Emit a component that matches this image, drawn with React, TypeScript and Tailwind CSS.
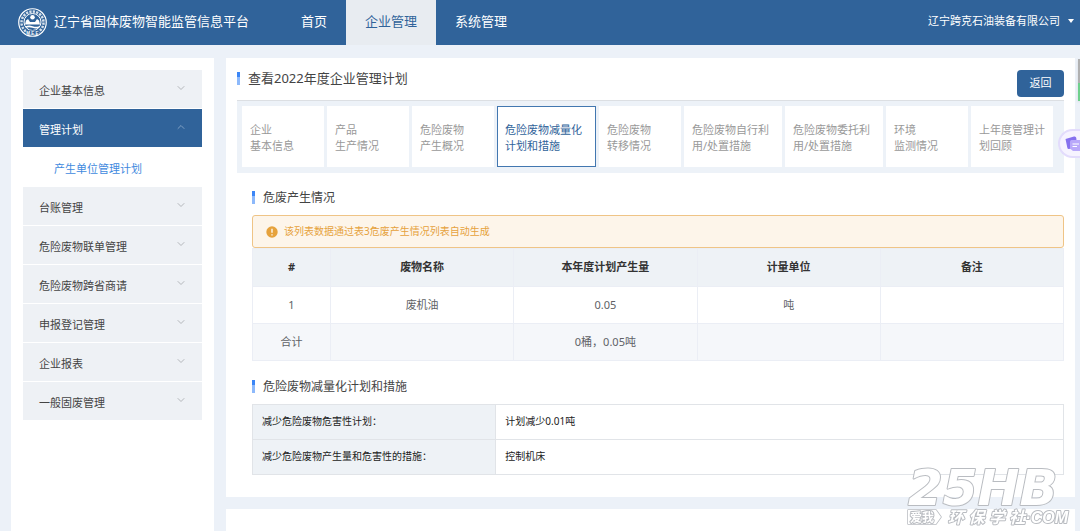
import React, { useState } from 'react';
import clsx from 'clsx';
import { ChevronDown, ChevronUp } from 'lucide-react';

const NAV_ITEMS = ['首页', '企业管理', '系统管理'];

const MENU_ITEMS = [
  { label: '企业基本信息' },
  { label: '管理计划', children: ['产生单位管理计划'] },
  { label: '台账管理' },
  { label: '危险废物联单管理' },
  { label: '危险废物跨省商请' },
  { label: '申报登记管理' },
  { label: '企业报表' },
  { label: '一般固废管理' },
];

const STEPS = [
  { lines: ['企业', '基本信息'], width: 'w-[82px]' },
  { lines: ['产品', '生产情况'], width: 'w-[82px]' },
  { lines: ['危险废物', '产生概况'], width: 'w-[82px]' },
  { lines: ['危险废物减量化', '计划和措施'], width: 'w-[99px]' },
  { lines: ['危险废物', '转移情况'], width: 'w-[82px]' },
  { lines: ['危险废物自行利', '用/处置措施'], width: 'w-[98px]' },
  { lines: ['危险废物委托利', '用/处置措施'], width: 'w-[98px]' },
  { lines: ['环境', '监测情况'], width: 'w-[82px]' },
  { lines: ['上年度管理计', '划回顾'], width: 'w-[82px]' },
];

const COLUMNS = ['#', '废物名称', '本年度计划产生量', '计量单位', '备注'];

const ROWS = [
  ['1', '废机油', '0.05', '吨', ''],
  ['合计', '', '0桶，0.05吨', '', ''],
];

const MEASURES = [
  { label: '减少危险废物危害性计划：', value: '计划减少0.01吨' },
  { label: '减少危险废物产生量和危害性的措施：', value: '控制机床' },
];

function Emblem() {
  return (
    <svg viewBox="0 0 58 58" className="h-[29px] w-[29px] shrink-0" fill="none" stroke="#fff">
      <circle cx="29" cy="29" r="27.5" strokeWidth="2.4" />
      <circle cx="29" cy="29" r="22" strokeWidth="5" strokeDasharray="4.5 2.4" opacity="0.8" />
      <circle cx="29" cy="28" r="17" fill="#30639a" strokeWidth="2" />
      <circle cx="29" cy="18.5" r="4.5" fill="#fff" stroke="none" />
      <path d="M14 33 L16 25 L20 22 L24 28 H34 L38 22 L42 25 L44 33 Z" fill="#fff" stroke="none" />
      <path d="M16 38 Q22 35.5 29 38 T42 38" strokeWidth="3" />
      <rect x="16" y="45" width="26" height="8" fill="#30639a" stroke="none" />
      <text x="29" y="53" textAnchor="middle" fill="#fff" stroke="none" fontSize="9" fontWeight="700" fontFamily="Liberation Sans, sans-serif">
        M E E
      </text>
    </svg>
  );
}

function Marker() {
  return (
    <span className="mb-[2px] flex h-[13px] w-[3px] shrink-0 flex-col">
      <span className="h-[5px] bg-[#3b86f7]" />
      <span className="flex-1 bg-[#8db9fb]" />
    </span>
  );
}

function Header() {
  return (
    <header className="flex h-[45px] shrink-0 items-stretch bg-[#30639a] text-white">
      <div className="flex w-[282px] items-center gap-[7px] pl-[18px]">
        <Emblem />
        <h1 className="pb-[2px] text-[13px] whitespace-nowrap">辽宁省固体废物智能监管信息平台</h1>
      </div>
      <nav className="flex">
        {NAV_ITEMS.map((item) => (
          <a
            key={item}
            href="#"
            className={clsx(
              'flex items-center px-[19px] pb-[2px] text-[13px]',
              item === '企业管理' && 'bg-[#e8ecf1] text-[#30639a]'
            )}
          >
            {item}
          </a>
        ))}
      </nav>
      <button className="ml-auto flex items-center gap-2 pr-[6px] pb-[3px] text-[11px]">
        辽宁跨克石油装备有限公司
        <svg viewBox="0 0 6 4" className="h-1 w-[6px]" fill="#fff">
          <path d="M0 0 H6 L3 4 Z" />
        </svg>
      </button>
    </header>
  );
}

function Sidebar() {
  const [open, setOpen] = useState('管理计划');

  return (
    <aside className="w-[203px] shrink-0 bg-white p-3">
      <ul className="flex flex-col gap-px text-[11px] text-[#444]">
        {MENU_ITEMS.map((item) => {
          const active = item.label === open;
          const Chevron = active ? ChevronUp : ChevronDown;

          return (
            <li key={item.label}>
              <button
                onClick={() => setOpen(item.label)}
                className={clsx(
                  'flex h-[38px] w-full items-center justify-between pr-[15px] pl-4',
                  active ? 'bg-[#30639a] text-white' : 'bg-[#eef1f5]'
                )}
              >
                <span className="pt-[5px]">{item.label}</span>
                <Chevron
                  size={12}
                  strokeWidth={2}
                  className={clsx('mb-[2px]', active ? 'text-[#7fa0c4]' : 'text-[#b4b7bb]')}
                />
              </button>
              {active &&
                item.children?.map((child) => (
                  <a key={child} href="#" className="flex h-[39px] items-center pt-[5px] pl-[31px] text-[#3f8ade]">
                    {child}
                  </a>
                ))}
            </li>
          );
        })}
      </ul>
    </aside>
  );
}

function Steps() {
  const [current, setCurrent] = useState(3);

  return (
    <div className="flex gap-[3px] border-t border-[#dcdfe3] bg-[#edf2f8] px-[5px] pt-[5px] pb-[6px]">
      {STEPS.map((step, i) => (
        <button
          key={i}
          onClick={() => setCurrent(i)}
          className={clsx(
            'flex h-[61px] flex-col items-start justify-center border px-[7px] pt-[3px] text-[11px] leading-4 whitespace-nowrap',
            step.width,
            i === current ? 'border-[#4277b0] bg-white text-[#30639a]' : 'border-white bg-white text-[#999]'
          )}
        >
          {step.lines.map((line) => (
            <span key={line}>{line}</span>
          ))}
        </button>
      ))}
    </div>
  );
}

function SectionTitle({ children }: { children: React.ReactNode }) {
  return (
    <h3 className="flex h-5 items-center gap-2 text-[12px] text-[#444]">
      <Marker />
      {children}
    </h3>
  );
}

function WasteTable() {
  return (
    <table className="w-full table-fixed border-collapse text-center text-[11px] text-[#606266]">
      <colgroup>
        <col className="w-[78px]" />
        <col />
        <col />
        <col />
        <col />
      </colgroup>
      <thead>
        <tr className="h-[38px] bg-[#eef2f6] text-[#333]">
          {COLUMNS.map((column) => (
            <th key={column} className="border border-[#ebeef5] font-bold">
              {column}
            </th>
          ))}
        </tr>
      </thead>
      <tbody>
        {ROWS.map((row) => (
          <tr key={row[0]} className="h-[37px] last:bg-[#f5f7fa]">
            {row.map((cell, i) => (
              <td key={i} className="border border-[#ebeef5]">
                {cell}
              </td>
            ))}
          </tr>
        ))}
      </tbody>
    </table>
  );
}

function MeasureTable() {
  return (
    <table className="w-full table-fixed border-collapse text-left text-[10px] text-[#222]">
      <tbody>
        {MEASURES.map((row) => (
          <tr key={row.label} className="h-[35px]">
            <th className="w-[30%] border border-[#e1e4e8] bg-[#eef2f6] px-[9px] pb-[2px] font-normal">{row.label}</th>
            <td className="border border-[#e1e4e8] px-[9px] pb-[2px]">{row.value}</td>
          </tr>
        ))}
      </tbody>
    </table>
  );
}

function FloatingTools() {
  return (
    <>
      <div className="fixed top-[59px] right-0 flex h-[42px] w-[2px] flex-col shadow">
        <span className="h-6 bg-[#b0b0b0]" />
        <span className="flex-1 bg-[#6fd08c]" />
      </div>
      <button
        aria-label="文档"
        className="fixed top-[129px] right-0 flex h-[29px] w-[22px] items-center justify-end rounded-l-full border-2 border-r-0 border-[#e3dcfc] bg-[#f6f3ff]"
      >
        <svg viewBox="0 0 15 16" className="h-4 w-[15px]">
          <path d="M0.5 3 L9 0.5 Q11 0 11.3 2 L12 11 L4 13 Q2.6 13.2 2.4 12 Z" fill="#8671ee" />
          <path d="M5 5.5 Q5 4 6.5 4 H15 V15 H8 L5 12.5 Z" fill="#b9a8fa" />
          <path d="M7.5 8 H14 M7.5 10.5 H12" stroke="#fff" strokeWidth="1.2" />
        </svg>
      </button>
    </>
  );
}

function Watermark() {
  return (
    <svg viewBox="0 0 176 80" className="pointer-events-none fixed right-0 bottom-0 h-20 w-44" aria-hidden="true">
      <g fill="#fff" stroke="#b9bcc1" strokeWidth="2" paintOrder="stroke" strokeLinejoin="round">
        <text x="4" y="54" fontSize="50" fontWeight="700" fontStyle="italic" fontFamily="DejaVu Sans, sans-serif">
          25HB
        </text>
        <path d="M4 59 H32 L37 66 L32 73 H4 Z" strokeWidth="1.5" />
        <text x="6" y="71" fontSize="12" fontWeight="700" fontFamily="Noto Sans CJK SC, sans-serif">
          爱我
        </text>
        <text x="44" y="72" fontSize="16" fontWeight="700" fontStyle="italic" fontFamily="Liberation Sans, Noto Sans CJK SC, sans-serif">
          环 保 学 社·COM
        </text>
      </g>
    </svg>
  );
}

export default function App() {
  return (
    <div className="flex min-h-screen flex-col bg-[#ecf1f8] font-['Noto_Sans','Noto_Sans_CJK_SC',sans-serif]">
      <Header />

      <div className="flex flex-1 gap-3 pt-[13px] pr-[5px] pl-[11px]">
        <Sidebar />

        <main className="flex min-w-0 flex-1 flex-col gap-3">
          <section className="bg-white px-[11px] pb-[22px]">
            <div className="flex h-[42px] items-center justify-between">
              <h2 className="flex items-center gap-2 text-[13px] text-[#444]">
                <Marker />
                查看2022年度企业管理计划
              </h2>
              <button className="mt-2 h-[27px] w-[47px] rounded-sm bg-[#30639a] text-[11px] text-white">返回</button>
            </div>
            <Steps />

            <div className="pt-[15px] pl-[15px]">
              <SectionTitle>危废产生情况</SectionTitle>
              <div className="mt-[7px] flex h-[33px] items-center gap-[6px] rounded-[3px] border border-[#efc486] bg-[#fdf5ea] px-[13px] text-[10px] text-[#e6a23c]">
                <svg viewBox="0 0 12 12" className="h-3 w-3">
                  <circle cx="6" cy="6" r="5.7" fill="#e6a23c" />
                  <path d="M6 2.8 V6.8 M6 8.2 V9.4" stroke="#fff" strokeWidth="1.3" />
                </svg>
                该列表数据通过表3危废产生情况列表自动生成
              </div>
              <WasteTable />

              <div className="mt-4 mb-[7px]">
                <SectionTitle>危险废物减量化计划和措施</SectionTitle>
              </div>
              <MeasureTable />
            </div>
          </section>

          <section className="flex-1 bg-white" />
        </main>
      </div>

      <FloatingTools />
      <Watermark />
    </div>
  );
}
